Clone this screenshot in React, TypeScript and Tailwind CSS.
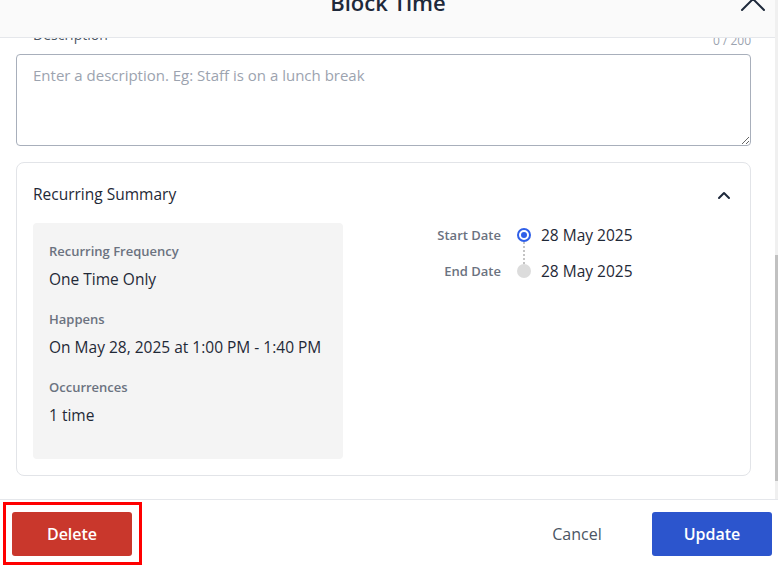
import React from "react";

export default function App() {
  return (
    <div className="w-[778px] h-[582px] overflow-hidden bg-white flex flex-col font-['Open_Sans',sans-serif] text-[#1f2937]">
      <div className="h-[499px] flex flex-row">
        <div className="flex-1 flex flex-col min-w-0">
          <div className="relative z-10 h-[38px] shrink-0 bg-[#fafafa] border-b border-[#e5e7eb] flex items-start pl-[10px] pr-[9px] overflow-hidden">
            <div className="w-[26px]" />
            <div className="flex-1 flex justify-center">
              <span className="-mt-[13px] text-[22px] leading-[30px] font-semibold text-[#1e293b]">Block Time</span>
            </div>
            <svg width="26" height="16" viewBox="0 0 26 16" className="-mt-[4px]" fill="none" stroke="#1e293b" strokeWidth="2" strokeLinecap="round" strokeLinejoin="round">
              <path d="M2 14 L13 3 L24 14" />
            </svg>
          </div>
          <div className="flex-1 overflow-hidden pl-[16px] pr-[24px]">
            <div className="-mt-[13px] h-[20px] flex justify-between items-end">
              <span className="text-[14px] leading-[20px] text-[#4b5563] pl-[17px]">Description</span>
              <span className="text-[12px] leading-[14px] text-[#9ca3af] -mb-[3px]">0 / 200</span>
            </div>
            <textarea
              className="mt-[9px] block w-full h-[92px] border border-[#a8afbb] rounded-[4px] px-[16px] py-[9px] text-[15px] leading-[22px] placeholder:text-[#9ca3af] outline-none resize-y"
              placeholder="Enter a description. Eg: Staff is on a lunch break"
            />
            <div className="mt-[16px] h-[314px] border border-[#e2e4e8] rounded-[8px] px-[16px] pt-[20px]">
              <div className="flex items-center justify-between h-[22px]">
                <span className="text-[15.5px] leading-[22px] font-medium text-[#1f2937]">Recurring Summary</span>
                <svg width="16" height="16" viewBox="0 0 16 16" fill="none" stroke="#1e293b" strokeWidth="2" strokeLinecap="round" strokeLinejoin="round" className="mr-[2px] mt-[1px]">
                  <path d="M3 11 L8 6 L13 11" />
                </svg>
              </div>
              <div className="mt-[18px] flex flex-row">
                <div className="w-[310px] h-[236px] bg-[#f4f4f4] rounded-[4px] px-[16px] pt-[19px] flex flex-col">
                  <span className="text-[13px] leading-[18px] font-semibold text-[#6b7280]">Recurring Frequency</span>
                  <span className="mt-[8px] text-[15.5px] leading-[22px] text-[#1f2937]">One Time Only</span>
                  <span className="mt-[20px] text-[13px] leading-[18px] font-semibold text-[#6b7280]">Happens</span>
                  <span className="mt-[8px] text-[15.5px] leading-[22px] text-[#1f2937]">On May 28, 2025 at 1:00 PM - 1:40 PM</span>
                  <span className="mt-[20px] text-[13px] leading-[18px] font-semibold text-[#6b7280]">Occurrences</span>
                  <span className="mt-[8px] text-[15.5px] leading-[22px] text-[#1f2937]">1 time</span>
                </div>
                <div className="ml-[48px] mt-[1px] flex flex-row items-start">
                  <div className="w-[110px] flex flex-col gap-[14px] items-end">
                    <span className="h-[22px] text-[13px] leading-[22px] font-semibold text-[#6b7280]">Start Date</span>
                    <span className="h-[22px] text-[13px] leading-[22px] font-semibold text-[#6b7280]">End Date</span>
                  </div>
                  <div className="ml-[16px] pt-[4px] flex flex-col items-center">
                    <div className="w-[14px] h-[14px] rounded-full border-2 border-[#2f5fe8] bg-white flex items-center justify-center">
                      <div className="w-[6px] h-[6px] rounded-full bg-[#2f5fe8]" />
                    </div>
                    <div className="h-[22px] border-l-2 border-dotted border-[#c4c4c4]" />
                    <div className="w-[14px] h-[14px] rounded-full bg-[#dcdcdc]" />
                  </div>
                  <div className="ml-[10px] flex flex-col gap-[14px]">
                    <span className="h-[22px] text-[15.5px] leading-[22px] text-[#1f2937]">28 May 2025</span>
                    <span className="h-[22px] text-[15.5px] leading-[22px] text-[#1f2937]">28 May 2025</span>
                  </div>
                </div>
              </div>
            </div>
          </div>
        </div>
        <div className="w-[3px] bg-[#f0f0f0] relative">
          <div className="absolute left-0 right-0 top-[255px] h-[226px] bg-[#c1c1c1]" />
        </div>
      </div>
      <div className="flex-1 border-t border-[#e5e7eb] flex flex-row items-start pt-[2px] pl-[3px] pr-[6px]">
        <div className="border-[3px] border-[#ff0000] pt-[7px] pb-[6px] pl-[6px] pr-[7px]">
          <button className="w-[120px] h-[44px] bg-[#c9372c] rounded-[3px] text-white text-[16px] font-semibold">Delete</button>
        </div>
        <div className="flex-1" />
        <div className="pt-[10px] flex flex-row">
          <button className="w-[120px] h-[44px] text-[16px] font-medium text-[#4b5563]">Cancel</button>
          <button className="ml-[15px] w-[120px] h-[44px] bg-[#2c55cd] rounded-[3px] text-white text-[16px] font-semibold">Update</button>
        </div>
      </div>
    </div>
  );
}
